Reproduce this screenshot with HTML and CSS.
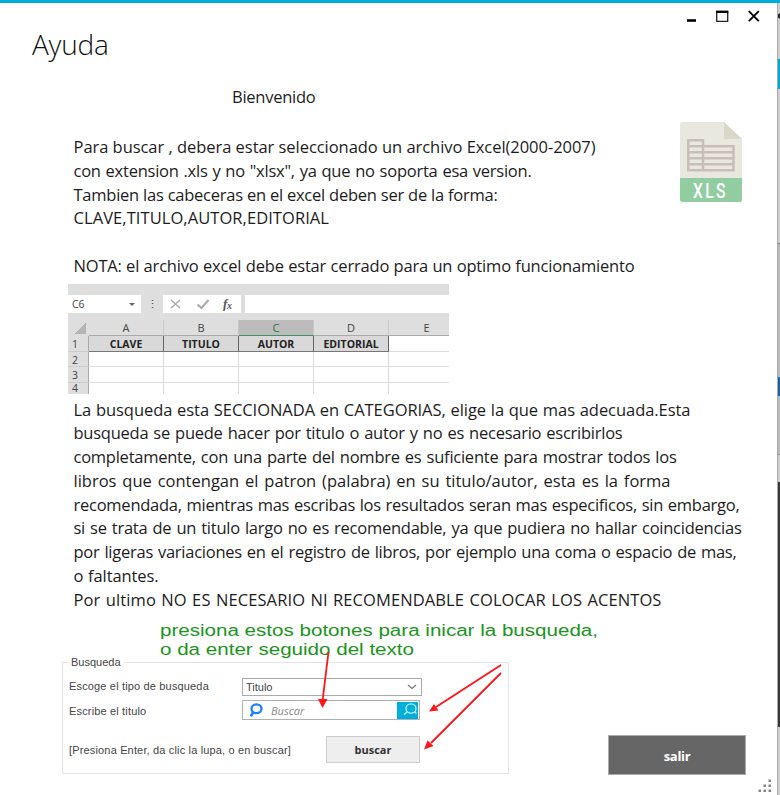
FILE: index.html
```html
<!DOCTYPE html>
<html lang="es">
<head>
<meta charset="utf-8">
<title>Ayuda</title>
<link rel="stylesheet" href="styles.css">
</head>
<body>
<div class="desktop">
<main class="window">
  <header class="titlebar">
    <h1>Ayuda</h1>
    <svg class="controls" width="76" height="16" viewBox="0 0 76 16">
      <path d="M1 12.500h9" stroke="#000" stroke-width="2.600"/>
      <path d="M30.700 4v9.300h11V4" fill="none" stroke="#222" stroke-width="1.300"/>
      <path d="M30 3.800h12.400" stroke="#000" stroke-width="2.400"/>
      <path d="M62.800 3.200l10 10M72.800 3.200l-10 10" stroke="#000" stroke-width="1.900"/>
    </svg>
  </header>
  <p class="welcome"><span class="line w82">Bienvenido</span></p>
  <div class="intro">
    <div class="copy">
      <p class="line w522">Para buscar , debera estar seleccionado un archivo Excel(2000-2007)</p>
      <p class="line w458">con extension .xls y no "xlsx", ya que no soporta esa version.</p>
      <p class="line w424">Tambien las cabeceras en el excel deben ser de la forma:</p>
      <p class="line caps">CLAVE,TITULO,AUTOR,EDITORIAL</p>
      <p class="line">&nbsp;</p>
      <p class="line w561">NOTA: el archivo excel debe estar cerrado para un optimo funcionamiento</p>
    </div>
    <svg class="xls" width="62" height="81" viewBox="0 0 62 81">
      <path d="M2 0H44L62 17V56H0V2Q0 0 2 0Z" fill="#e8e8df"/>
      <path d="M44 0L62 17H44Z" fill="#d8d7ca"/>
      <path d="M0 56H62V78Q62 80 60 80H2Q0 80 0 78Z" fill="#91cda0"/>
      <path d="M8.300 18.300H23V48.200H8.300ZM23 24.300H53.500V48.200H23M8.300 24.300H23M8.300 30.300H53.500M8.300 36.300H53.500M8.300 42.300H53.500" fill="none" stroke="#c9bdb9" stroke-width="2.500"/>
      <text transform="translate(13 75.500) scale(.8 1)" class="xls-label">XLS</text>
    </svg>
  </div>
  <section class="sheet">
    <div class="ribbon"></div>
    <div class="formula">
      <div class="namebox"><span>C6</span><i class="caret"></i></div>
      <div class="dots">⋮</div>
      <div class="tools">
        <svg width="78" height="18" viewBox="0 0 78 18">
          <path d="M8 5l9 8M17 5l-9 8" stroke="#aaa" stroke-width="1.400"/>
          <path d="M34.500 9.500l4 3.500 7-8" fill="none" stroke="#aaa" stroke-width="2"/>
          <text x="60" y="13" class="fx">f</text><text x="64" y="13.500" class="fx small">x</text>
        </svg>
      </div>
      <div class="entry"></div>
    </div>
    <div class="grid">
      <div class="corner"></div><div class="col">A</div><div class="col">B</div><div class="col active">C</div><div class="col">D</div><div class="col last">E</div>
      <div class="row">1</div><div class="head">CLAVE</div><div class="head">TITULO</div><div class="head">AUTOR</div><div class="head">EDITORIAL</div><div class="cell"></div>
      <div class="row">2</div><div class="cell"></div><div class="cell"></div><div class="cell"></div><div class="cell"></div><div class="cell"></div>
      <div class="row">3</div><div class="cell"></div><div class="cell"></div><div class="cell"></div><div class="cell"></div><div class="cell"></div>
      <div class="row end-row">4</div><div class="cell"></div><div class="cell"></div><div class="cell"></div><div class="cell"></div><div class="cell"></div>
    </div>
  </section>
  <div class="details">
    <p class="line w617">La busqueda esta SECCIONADA en CATEGORIAS, elige la que mas adecuada.Esta</p>
    <p class="line w549">busqueda se puede hacer por titulo o autor y no es necesario escribirlos</p>
    <p class="line w603">completamente, con una parte del nombre es suficiente para mostrar todos los</p>
    <p class="line w597">libros que contengan el patron (palabra) en su titulo/autor, esta es la forma</p>
    <p class="line w666">recomendada, mientras mas escribas los resultados seran mas especificos, sin embargo,</p>
    <p class="line w668">si se trata de un titulo largo no es recomendable, ya que pudiera no hallar coincidencias</p>
    <p class="line w663">por ligeras variaciones en el registro de libros, por ejemplo una coma o espacio de mas,</p>
    <p class="line w85">o faltantes.</p>
    <p class="line w588">Por ultimo NO ES NECESARIO NI RECOMENDABLE COLOCAR LOS ACENTOS</p>
  </div>
  <div class="bottom">
    <section class="demo">
      <div class="group">
        <span class="legend">Busqueda</span>
        <label class="lbl">Escoge el tipo de busqueda</label>
        <div class="select"><span>Titulo</span>
          <svg width="10" height="6" viewBox="0 0 10 6"><path d="M1 1l4 3.500 4-3.500" fill="none" stroke="#777" stroke-width="1.300"/></svg>
        </div>
        <label class="lbl">Escribe el titulo</label>
        <div class="search">
          <svg width="14" height="15" viewBox="0 0 14 15"><ellipse cx="7.500" cy="5.800" rx="5" ry="4.400" fill="none" stroke="#1e80ff" stroke-width="2.300"/><path d="M4.300 9L1.800 13.300" stroke="#1e80ff" stroke-width="2.600"/></svg>
          <span class="hint">Buscar</span>
          <svg class="go" width="21" height="17" viewBox="0 0 21 17"><ellipse cx="14" cy="6.500" rx="5" ry="4.600" fill="none" stroke="#bdeefa" stroke-width="1.400"/><path d="M10.500 9.800L7 12.500M17.500 10l2 1.500" stroke="#bdeefa" stroke-width="1.400"/></svg>
        </div>
        <label class="lbl tip">[Presiona Enter, da clic la lupa, o en buscar]</label>
        <div class="button">buscar</div>
      </div>
      <svg class="notes" width="540" height="155" viewBox="62 620 540 155">
        <text x="160" y="636" textLength="438" lengthAdjust="spacingAndGlyphs">presiona estos botones para inicar la busqueda,</text>
        <text x="160" y="654.500" textLength="254" lengthAdjust="spacingAndGlyphs">o da enter seguido del texto</text>
        <g stroke="#ff1418" stroke-width="1.800" fill="none"><path d="M328.500 652L322.500 701M501 665L436 707M501 673L431 743"/></g>
        <g fill="#ff1418"><path d="M318 699h9.500l-5 9zM429 711.500l5-7.500 4.500 6.500zM424 749.500l3.500-9 6 5.500z"/></g>
      </svg>
    </section>
    <div class="exit">salir</div>
  </div>
  <svg class="grip" width="14" height="14" viewBox="0 0 14 14" fill="#858585"><path d="M10.500 0.500h2.500v2.500h-2.500zM5.500 5.500h2.500v2.500h-2.500zM10.500 5.500h2.500v2.500h-2.500zM.5 10.500h2.500v2.500h-2.500zM5.500 10.500h2.500v2.500h-2.500zM10.500 10.500h2.500v2.500h-2.500z"/></svg>
</main>
<div class="behind">
  <div class="seg top"></div><div class="seg blue"></div><div class="seg light"></div><div class="seg mid"></div><div class="seg navy"></div><div class="seg mid2"></div><div class="seg light2"></div><div class="seg dark"></div><div class="seg end"></div>
</div>
</div>
</body>
</html>
```
FILE: styles.css
```css
* { box-sizing: border-box; }
body { margin: 0; width: 780px; height: 795px; overflow: hidden; background: #fff; font-family: "Open Sans", "Noto Sans", sans-serif; color: #1c1c1c; }
p, h1 { margin: 0; }
svg { display: block; }
.desktop { display: flex; height: 795px; border-top: 3px solid #00aedb; }
.window { position: relative; width: 777px; height: 792px; flex: none; }

.titlebar { display: flex; justify-content: space-between; height: 80px; padding: 5px 15px 0 32px; }
.titlebar h1 { padding-top: 16px; font-size: 28px; line-height: 40px; font-weight: 300; letter-spacing: -0.2px; color: #111; }

.line { display: block; height: 23.75px; font-size: 16.5px; line-height: 23.75px; letter-spacing: -0.25px; white-space: nowrap; text-align-last: justify; }
.welcome { padding: 2px 0 0 232px; height: 52px; }
.intro { display: flex; padding-left: 74px; height: 149px; }
.copy { width: 606px; flex: none; }
.copy .line, .details .line { margin-left: -0.5px; }
.w82 { width: 82px; } .w458 { width: 458px; } .w424 { width: 424px; }
.w549 { width: 549px; } .w603 { width: 603px; } .w666 { width: 666px; } .w668 { width: 668px; } .w663 { width: 663px; }
.w85 { width: 85px; letter-spacing: -0.1px; }
.w522 { width: 522px; letter-spacing: -0.05px; }
.w561 { width: 561px; letter-spacing: -0.18px; }
.w617 { width: 617px; letter-spacing: -0.05px; }
.w597 { width: 597px; letter-spacing: 0; }
.w588 { width: 588px; letter-spacing: 0.1px; }
.caps { width: 256px; letter-spacing: 0.07px; text-align-last: left; }
.xls { margin-top: -13px; }
.xls-label { font: 500 19.5px Roboto, sans-serif; letter-spacing: 3px; fill: #fff; }

.sheet { width: 381px; height: 110px; margin-left: 68px; background: #dedede; font-size: 10.5px; color: #444; overflow: hidden; }
.ribbon { height: 11px; }
.formula { display: grid; grid-template-columns: 73px 22px 78px 4px 204px; height: 18px; margin-bottom: 7px; }
.namebox { display: flex; align-items: center; justify-content: space-between; padding: 0 6px 0 4px; background: #fff; }
.caret { border: 3px solid transparent; border-top-color: #666; border-bottom: 0; }
.dots { text-align: center; line-height: 18px; font-size: 11px; }
.tools { background: #fff; }
.entry { grid-column: 5; background: #fff; }
.fx { font: italic bold 13px "Liberation Serif", serif; fill: #555; }
.fx.small { font-size: 10px; }
.grid { display: grid; grid-template-columns: 21px 75px 75px 75px 75px 60px; grid-template-rows: 16px 16px 15px 16px 11px; text-align: center; line-height: 16px; }
.corner { background: linear-gradient(135deg, transparent 50%, #b5b5b5 50%); width: 12px; height: 11px; margin: 3px 0 0 6px; }
.col { border-right: 1px solid #c8c8c8; border-bottom: 1px solid #aaa; font-size: 11px; line-height: 15px; }
.col.last { border-right: 0; padding-left: 15px; }
.active { background: #bcbcbc; border-bottom: 1px solid #3b9162; color: #217346; }
.row { border-right: 1px solid #aaa; border-bottom: 1px solid #ccc; text-align: left; padding-left: 4px; }
.end-row { line-height: 11px; border-bottom: 0; }
.head { border-right: 1px solid #666; border-bottom: 1px solid #777; background: #d9d9d9; color: #222; font-weight: 700; font-size: 10.5px; line-height: 16px; }
.cell { background: #fff; border-right: 1px solid #ddd; border-bottom: 1px solid #ddd; }
.cell:nth-child(6n) { border-right: 0; }
.end-row ~ .cell { border-bottom: 0; }

.details { height: 226px; padding: 3.7px 0 0 74px; }
.bottom { position: relative; display: flex; justify-content: space-between; padding: 0 31px 0 62px; }
.demo { position: relative; width: 447px; padding-top: 42px; font: 11px "Liberation Sans", sans-serif; color: #444; }
.group { display: grid; grid-template-columns: 172px auto; grid-template-rows: 18px 21px 27px; row-gap: 4px; width: 447px; height: 112px; padding: 15px 0 0 6px; border: 1px solid #e4e4e4; position: relative; align-content: start; }
.legend { position: absolute; left: 5px; top: -7px; padding: 0 3px; background: #fff; line-height: 13px; }
.lbl { line-height: 17px; letter-spacing: 0.16px; white-space: nowrap; }
.select { display: flex; align-items: center; justify-content: space-between; width: 180px; height: 18px; margin-left: 1px; padding: 0 4px 0 3px; border: 1px solid #aaa; background: #fff; }
.search { display: flex; align-items: center; width: 178px; height: 20px; margin-left: 1px; padding: 0 1px 0 6px; border: 1px solid #b0b0b0; }
.search + .lbl { margin-top: 17px; }
.group > .lbl:nth-of-type(2) { padding-top: 3px; }
.hint { padding-left: 8px; font-family: "Open Sans", sans-serif; font-style: italic; color: #888; }
.go { margin-left: auto; background: #00aedb; }
.button { width: 94px; height: 27px; margin: 11px 0 0 85px; border: 1px solid #ccc; background: #eee; text-align: center; font: 700 11px/25px "Open Sans", sans-serif; color: #333; }
.notes { position: absolute; left: 0; top: 0; }
.notes text { font: 16px "Liberation Sans", sans-serif; fill: #1c941c; }
.exit { width: 138px; height: 40px; margin-top: 115px; background: #666; border: 1px solid #aaa; color: #fff; text-align: center; font-size: 13px; font-weight: 700; letter-spacing: -0.3px; line-height: 40px; }
.grip { position: absolute; right: 5px; bottom: 2px; }

.behind { display: flex; flex-direction: column; width: 3px; border-left: 1px solid #aaa; background: #d0d0d0; }
.seg { flex: none; }
.top { height: 56px; background: radial-gradient(circle at 2px 13px, #222 2px, transparent 3px); }
.blue { height: 30px; background: #00a6d2; }
.light { height: 155px; border-bottom: 1px solid #777; }
.mid { height: 133px; background: #bbb; }
.navy { height: 19px; background: #1c60a8; }
.mid2 { height: 59px; background: #bbb; border-bottom: 1px solid #888; }
.light2 { height: 27px; }
.dark { height: 245px; background: #383838; }
.end { height: 68px; }
```
